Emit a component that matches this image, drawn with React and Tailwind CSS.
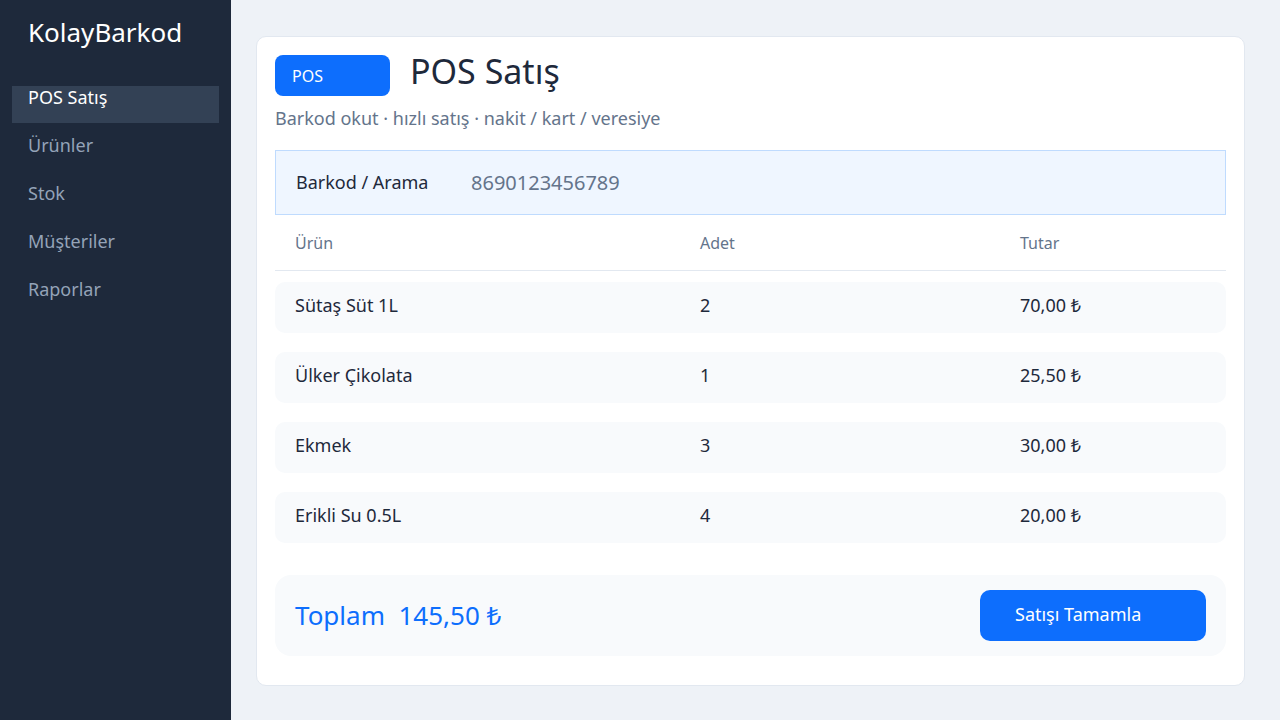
const nav = ["POS Satış", "Ürünler", "Stok", "Müşteriler", "Raporlar"];

const rows = [
  { name: "Sütaş Süt 1L", qty: 2, total: "70,00 ₺" },
  { name: "Ülker Çikolata", qty: 1, total: "25,50 ₺" },
  { name: "Ekmek", qty: 3, total: "30,00 ₺" },
  { name: "Erikli Su 0.5L", qty: 4, total: "20,00 ₺" },
];

export default function App() {
  return (
    <div
      className="flex h-[720px] w-[1280px] bg-[#eef2f7]"
      style={{ fontFamily: '"Segoe UI", "Noto Sans", "Open Sans", sans-serif' }}
    >
      {/* sidebar */}
      <aside className="w-[231px] shrink-0 bg-[#1e293b] px-3 pt-[13px]">
        <div className="px-4 text-[26px] leading-[38px] text-white">KolayBarkod</div>
        <ul className="mt-[35px] flex flex-col gap-[11px]">
          {nav.map((item, i) => (
            <li
              key={item}
              className={
                i === 0
                  ? "h-[37px] bg-[#334155] px-4 text-[18px] leading-[22px] text-white"
                  : "h-[37px] px-4 text-[18px] leading-[22px] text-[#94a3b8]"
              }
            >
              {item}
            </li>
          ))}
        </ul>
      </aside>

      {/* main */}
      <main className="flex-1 pl-[25px] pr-[35px] pt-[36px]">
        <div className="h-[650px] rounded-[10px] border border-[#e2e8f0] bg-white px-[18px] pt-[18px]">
          <div className="flex h-[41px] gap-5">
            <span className="flex h-[41px] w-[115px] items-center rounded-[8px] bg-[#0d6efd] px-[17px] text-[16px] text-white">
              POS
            </span>
            <h1 className="-mt-[4px] text-[34px] leading-[40px] text-[#1e293b]">POS Satış</h1>
          </div>
          <p className="mt-[8px] text-[18px] leading-[28px] text-[#64748b]">
            Barkod okut · hızlı satış · nakit / kart / veresiye
          </p>

          <div className="mt-[18px] flex h-[65px] items-center border border-[#bfdbfe] bg-[#eff6ff] px-5">
            <span className="w-[175px] text-[18px] text-[#1e293b]">Barkod / Arama</span>
            <span className="text-[20px] text-[#64748b]">8690123456789</span>
          </div>

          <div className="grid h-[56px] grid-cols-[405px_320px_1fr] items-center border-b border-[#e2e8f0] px-5 text-[16px] text-[#64748b]">
            <span>Ürün</span>
            <span>Adet</span>
            <span>Tutar</span>
          </div>

          <div className="mt-[11px] flex flex-col gap-[19px]">
            {rows.map((r) => (
              <div
                key={r.name}
                className="grid h-[51px] grid-cols-[405px_320px_1fr] items-center rounded-[10px] bg-[#f8fafc] px-5 pb-[5px] text-[18px] text-[#1e293b]"
              >
                <span>{r.name}</span>
                <span>{r.qty}</span>
                <span>{r.total}</span>
              </div>
            ))}
          </div>

          <div className="mt-[32px] flex h-[81px] items-center justify-between rounded-[16px] bg-[#f8fafc] pl-5 pr-5">
            <span className="whitespace-pre text-[26px] text-[#0d6efd]">Toplam  145,50 ₺</span>
            <button className="h-[51px] w-[226px] rounded-[10px] bg-[#0d6efd] pb-[2px] pl-[35px] text-left text-[18px] text-white">
              Satışı Tamamla
            </button>
          </div>
        </div>
      </main>
    </div>
  );
}
